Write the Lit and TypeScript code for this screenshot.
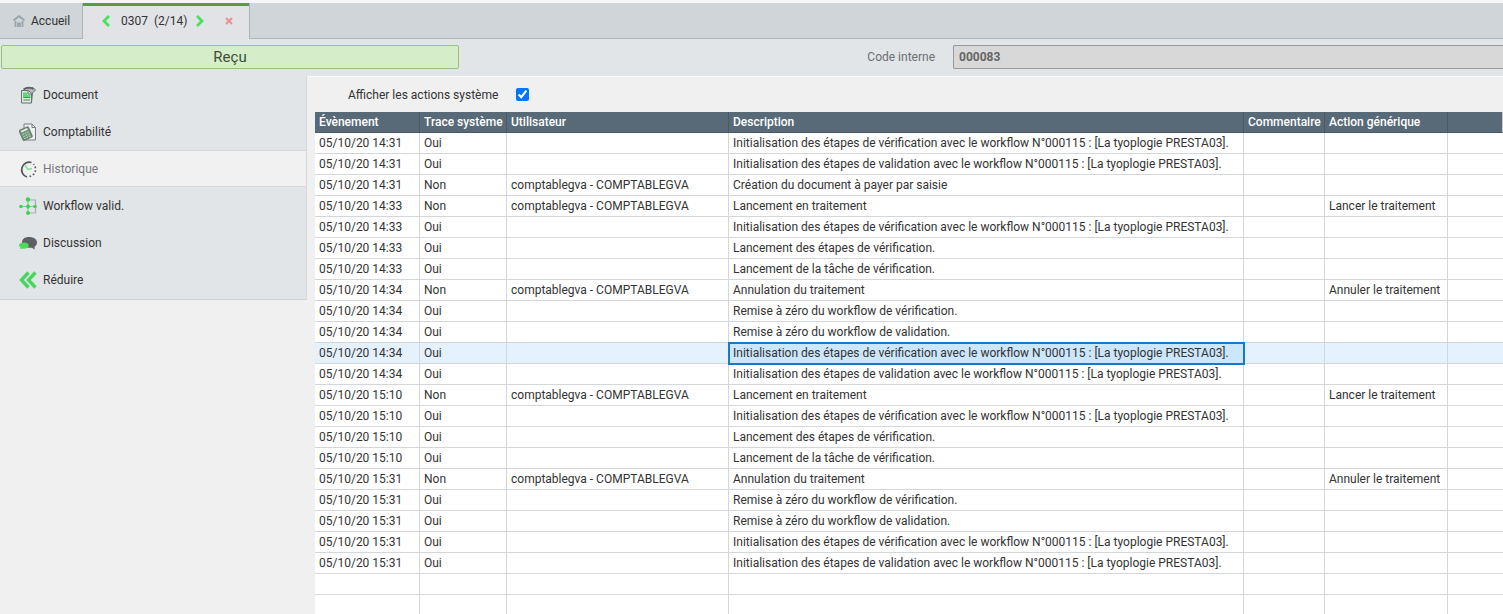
import { LitElement, html, svg, css, nothing } from "lit";
import { customElement, state } from "lit/decorators.js";
import { classMap } from "lit/directives/class-map.js";

type Row = [date: string, trace: string, user: string, description: string, action: string];

const USER = "comptablegva - COMPTABLEGVA";
const INIT_VERIF = "Initialisation des étapes de vérification avec le workflow N°000115 : [La tyoplogie PRESTA03].";
const INIT_VALID = "Initialisation des étapes de validation avec le workflow N°000115 : [La tyoplogie PRESTA03].";
const RESET_VERIF = "Remise à zéro du workflow de vérification.";
const RESET_VALID = "Remise à zéro du workflow de validation.";
const START_STEPS = "Lancement des étapes de vérification.";
const START_TASK = "Lancement de la tâche de vérification.";

const system = (time: string, text: string): Row => [`05/10/20 ${time}`, "Oui", "", text, ""];
const manual = (time: string, text: string, action = ""): Row => [`05/10/20 ${time}`, "Non", USER, text, action];

const ROWS: Row[] = [
  system("14:31", INIT_VERIF),
  system("14:31", INIT_VALID),
  manual("14:31", "Création du document à payer par saisie"),
  manual("14:33", "Lancement en traitement", "Lancer le traitement"),
  system("14:33", INIT_VERIF),
  system("14:33", START_STEPS),
  system("14:33", START_TASK),
  manual("14:34", "Annulation du traitement", "Annuler le traitement"),
  system("14:34", RESET_VERIF),
  system("14:34", RESET_VALID),
  system("14:34", INIT_VERIF),
  system("14:34", INIT_VALID),
  manual("15:10", "Lancement en traitement", "Lancer le traitement"),
  system("15:10", INIT_VERIF),
  system("15:10", START_STEPS),
  system("15:10", START_TASK),
  manual("15:31", "Annulation du traitement", "Annuler le traitement"),
  system("15:31", RESET_VERIF),
  system("15:31", RESET_VALID),
  system("15:31", INIT_VERIF),
  system("15:31", INIT_VALID),
];

const HEADINGS = ["Évènement", "Trace système", "Utilisateur", "Description", "Commentaire", "Action générique", ""];
const COLUMNS = ["date", "trace", "user", "description", "comment", "action", "rest"];

const icons = {
  document: svg`
    <path d="M6 2.500l8-1 2.500 2.500-3 3-1 9.500-2 .5" fill="#b4babb" stroke="#6a7070" stroke-width="1"/>
    <path d="M4.500 3.500q4.500-3.500 10-.5" fill="none" stroke="#5a6060" stroke-width="1.800"/>
    <path d="M2.500 4.500h7l3 3v9.500h-10z" fill="#dfe5e3" stroke="#6a7070"/>
    <path d="M4 6.500h4v2.500h3.500V12H4z" fill="#55dc6c"/>
    <path d="M4.500 11.500h6.500M4.500 14h6.500" stroke="#3d9a50" stroke-width="1.200"/>
    <path d="M9 4.500V8h3.500" fill="none" stroke="#6a7070"/>`,
  accounting: svg`
    <path d="M5 1h8l3.500 3.500V17H5z" fill="#edf0f1" stroke="#777d7d"/>
    <path d="M13 1v3.500h3.500" fill="none" stroke="#777d7d"/>
    <g transform="rotate(-24 7 10)">
      <rect x="1.500" y="5" width="10" height="11" rx="1" fill="#71907a" stroke="#6b776e"/>
      <path d="M3 6.800h7" stroke="#e6efe8" stroke-width="1.800"/>
      <path d="M3 10h7M3 12.300h7M3 14.500h7" stroke="#a5cfae" stroke-width="1.300" stroke-dasharray="1.800 .8"/>
    </g>`,
  history: svg`
    <path d="M12.500 2.500A7.500 7.500 0 1 0 8 17" fill="none" stroke="#54595c" stroke-width="1.700"/>
    <path d="M10.500 16.500A7.500 7.500 0 0 0 14.500 4" fill="none" stroke="#54595c" stroke-width="1.700" stroke-dasharray="1.700 2"/>
    <path d="M6 5.500l3 4 4-1" fill="none" stroke="#7fe08d" stroke-width="1.300"/>`,
  workflow: svg`
    <path d="M10 3h6.500v13H10" fill="none" stroke="#a8afb0" stroke-width="1.200"/>
    <path d="M2 9.500h14M9 3v13" fill="none" stroke="#70d87c" stroke-width="1.200"/>
    <circle cx="2" cy="9.500" r="1.800" fill="#43cf57"/><circle cx="9" cy="2.500" r="2.200" fill="#43cf57"/>
    <circle cx="9" cy="9.500" r="2" fill="#43cf57"/><circle cx="9" cy="16" r="2" fill="#43cf57"/>
    <circle cx="16" cy="9.500" r="1.800" fill="#43cf57"/>`,
  discussion: svg`
    <path d="M10 3c4.500 0 8 2.200 8 5.500 0 2-1 3.500-2.500 4.300l.3 2.700-3-1.800c-5 .5-9.800-1.200-9.800-5.200C3 5.200 5.500 3 10 3z" fill="#5d6165"/>
    <path d="M5 8.500c2.700 0 4.700 1.200 4.700 3.100S7.700 14.700 5 14.700H1l.5-1.400C.3 12.500 0 11.900 0 11.300 0 9.500 2.300 8.500 5 8.500z" fill="#4cdb5d"/>`,
  collapse: svg`
    <path d="M9.500 1.500L2.500 9l7 7.500M16.500 1.500L9.500 9l7 7.500" fill="none" stroke="#46d65c" stroke-width="3.400"/>`,
};

const MENU: { id: keyof typeof icons; label: string }[] = [
  { id: "document", label: "Document" },
  { id: "accounting", label: "Comptabilité" },
  { id: "history", label: "Historique" },
  { id: "workflow", label: "Workflow valid." },
  { id: "discussion", label: "Discussion" },
  { id: "collapse", label: "Réduire" },
];

@customElement("tab-bar")
export class TabBar extends LitElement {
  static styles = css`
    :host { display: block; padding-top: 3px; background: #f5f6f7; }
    .tabs { display: flex; height: 36px; background: #d0d5d9; }
    .filler { flex: 1; border-left: 1px solid #afb4b8; border-bottom: 1px solid #afb4b8; box-sizing: border-box; }
    .tab { display: flex; align-items: center; box-sizing: border-box; color: #333; font: 12px/16px Roboto, sans-serif; text-decoration: none; }
    .home { width: 83px; gap: 6px; padding-left: 13px; border-bottom: 1px solid #afb4b8; border-right: 1px solid #afb4b8; }
    .current { width: 166px; padding: 0 12px 3px 15px; border-top: 3px solid #5f9a3f; background: #e1e3e7; }
    .count { padding: 0 0 0 7px; }
    button { display: grid; place-items: center; width: 16px; height: 24px; margin: 0; padding: 0; border: 0; background: none; }
    .next { margin-left: 5px; }
    .close { margin-left: auto; }
  `;

  render() {
    return html`
      <nav class="tabs">
        <a class="tab home" href="#accueil">
          <svg width="12" height="12" viewBox="0 0 12 12" fill="none" stroke="#9aa6af">
            <path d="M.5 5.500L6 1.200l5.500 4.300" stroke-width="2" />
            <path d="M2.500 6v6M9.500 6v6M5 12V8.500h2V12" stroke-width="1.800" />
          </svg>
          Accueil
        </a>
        <div class="tab current">
          <button aria-label="Précédent">
            <svg width="10" height="12" viewBox="0 0 10 12"><path d="M8 1L3 6l5 5" fill="none" stroke="#4be05c" stroke-width="2.800" /></svg>
          </button>
          <span class="count">0307 &nbsp;(2/14)</span>
          <button class="next" aria-label="Suivant">
            <svg width="10" height="12" viewBox="0 0 10 12"><path d="M2 1l5 5-5 5" fill="none" stroke="#4be05c" stroke-width="2.800" /></svg>
          </button>
          <button class="close" aria-label="Fermer">
            <svg width="8" height="8" viewBox="0 0 8 8"><path d="M1 1l6 6M7 1L1 7" stroke="#ee8f92" stroke-width="2" /></svg>
          </button>
        </div>
        <div class="filler"></div>
      </nav>
    `;
  }
}

@customElement("side-menu")
export class SideMenu extends LitElement {
  @state() private active = "history";

  static styles = css`
    :host { display: block; }
    nav { padding-bottom: 1px; border-right: 1px solid #d5d9dc; border-bottom: 1px solid #cdd1d5; background: #e1e5e8; }
    .item { display: flex; align-items: center; gap: 6px; box-sizing: border-box; width: 100%; height: 37px; padding: 0 0 0 19px; border: 0; background: none; color: #333; font: 12px/16px Roboto, sans-serif; text-align: left; }
    .item.active { border-top: 1px solid #d3d7da; border-bottom: 1px solid #d3d7da; background: #f1f1f1; color: #77777f; }
  `;

  render() {
    return html`
      <nav>
        ${MENU.map(
          (m) => html`
            <button class=${classMap({ item: true, active: m.id === this.active })} @click=${() => (this.active = m.id)}>
              <svg width="18" height="18" viewBox="0 0 18 18">${icons[m.id]}</svg>
              <span>${m.label}</span>
            </button>
          `
        )}
      </nav>
    `;
  }
}

@customElement("history-table")
export class HistoryTable extends LitElement {
  @state() private selected = 10;

  static styles = css`
    :host { display: block; }
    table { width: 100%; table-layout: fixed; border-spacing: 0; background: #fff; color: #333; font: 12px/16px Roboto, sans-serif; }
    th, td { box-sizing: border-box; height: 21px; padding: 0 4px; border-right: 1px solid #d4d7d9; border-bottom: 1px solid #d4d7d9; text-align: left; white-space: nowrap; }
    th { border-color: #4a5965; background: #586a77; color: #fff; font-weight: 500; }
    th:last-child { border-right-color: #c5cbd0; }
    td:last-child { border-right: 0; }
    .date { width: 105px; }
    .trace { width: 87px; }
    .user { width: 222px; }
    .description { width: 515px; }
    .comment { width: 81px; }
    .action { width: 123px; }
    .selected td { background: #e5f1fd; }
    .selected .cell { outline: 2px solid #1479cf; outline-offset: -1px; background: #cce6fb; }
  `;

  private row(r: Row | null, i: number) {
    const [date, trace, user, description, action] = r ?? ["", "", "", "", ""];
    return html`
      <tr class=${classMap({ selected: i === this.selected })} @click=${() => (this.selected = r ? i : this.selected)}>
        <td>${date}</td>
        <td>${trace}</td>
        <td>${user}</td>
        <td class="cell">${description}</td>
        <td></td>
        <td>${action || nothing}</td>
        <td></td>
      </tr>
    `;
  }

  render() {
    return html`
      <table>
        <colgroup>${COLUMNS.map((c) => html`<col class=${c} />`)}</colgroup>
        <thead>
          <tr>${HEADINGS.map((h) => html`<th>${h}</th>`)}</tr>
        </thead>
        <tbody>${[...ROWS, null, null].map((r, i) => this.row(r, i))}</tbody>
      </table>
    `;
  }
}

@customElement("app-root")
export class AppRoot extends LitElement {
  static styles = css`
    :host { display: flex; flex-direction: column; height: 100vh; overflow: hidden; background: #f0f0f0; color: #333; font: 12px/16px Roboto, sans-serif; }
    .summary { display: grid; grid-template-columns: 458px 476px 1fr; align-items: center; padding: 6px 0 7px 1px; background: #e1e5e8; }
    .status { box-sizing: border-box; height: 24px; border: 1px solid #92c480; border-radius: 2px; background: #d5edc8; color: #3c4f3c; font-size: 15px; line-height: 22px; text-align: center; }
    .summary label { color: #6b6f72; text-align: right; }
    .code { box-sizing: border-box; height: 24px; min-width: 0; margin-left: 18px; padding: 0 5px; border: 1px solid #999; border-right: 0; border-radius: 2px 0 0 2px; background: #d8d8d8; color: #666; font: bold 12px/16px Roboto, sans-serif; }
    .body { display: grid; grid-template-columns: 307px minmax(0, 1fr); flex: 1; min-height: 0; }
    .main { padding-left: 8px; border-top: 1px solid #f8f9fa; }
    .filter { display: flex; align-items: center; gap: 18px; height: 35px; padding-left: 33px; }
    .filter input { width: 13px; height: 13px; margin: 0; accent-color: #0075ff; }
  `;

  render() {
    return html`
      <tab-bar></tab-bar>
      <header class="summary">
        <div class="status">Reçu</div>
        <label for="code">Code interne</label>
        <input id="code" class="code" value="000083" readonly />
      </header>
      <div class="body">
        <side-menu></side-menu>
        <main class="main">
          <div class="filter">
            <label for="system">Afficher les actions système</label>
            <input id="system" type="checkbox" checked />
          </div>
          <history-table></history-table>
        </main>
      </div>
    `;
  }
}
